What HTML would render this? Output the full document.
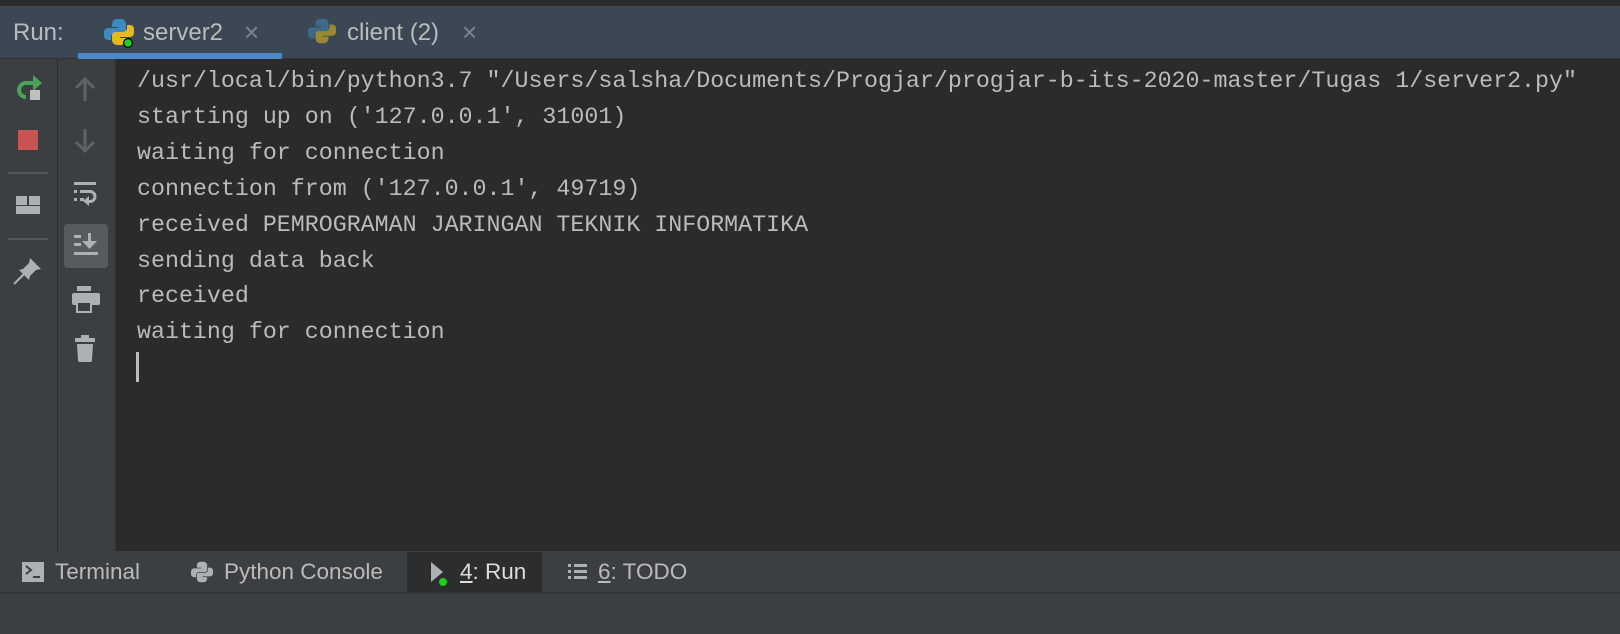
<!DOCTYPE html>
<html><head><style>
body{margin:0;width:1620px;height:634px;background:#2b2b2b;position:relative;overflow:hidden;font-family:"Liberation Sans",sans-serif}
.a{position:absolute}
.mono{font-family:"Liberation Mono",monospace;font-size:23.3px;color:#bbbbbb;white-space:pre}
.tab{font-size:24px;color:#bbbbbb}
.bt{font-size:22.5px;color:#bbbbbb}
</style></head><body>
<div class="a" style="left:0;top:0;width:1620px;height:6px;background:#2b2b2b"></div>
<div class="a" style="left:0;top:6px;width:1620px;height:52px;background:#3c4755"></div>
<div class="a" style="left:0;top:58px;width:1620px;height:1px;background:#323232"></div>
<div class="a tab" style="left:13px;top:19px">Run:</div>
<div class="a" style="left:78px;top:53px;width:204px;height:6px;background:#4a88c7"></div>
<svg class="a" style="left:104px;top:18px" width="30" height="30" viewBox="0 0 30 30">
<path d="M13 1h4a5 5 0 0 1 5 5v6a3 3 0 0 1-3 3h-8a4 4 0 0 0-4 4v3H4a4 4 0 0 1-4-4v-4a4 4 0 0 1 4-4h10V9H8V6a5 5 0 0 1 5-5z" fill="#3d8ac0"/>
<path d="M17 27h-4a5 5 0 0 1-5-5v-5a3 3 0 0 1 3-3h8a4 4 0 0 0 4-4V7h3a4 4 0 0 1 4 4v4a4 4 0 0 1-4 4H16v1h6v2a5 5 0 0 1-5 5z" fill="#e6b81c"/>
<circle cx="24" cy="25" r="5" fill="#000"/><circle cx="24" cy="25" r="3.7" fill="#1fd21f"/></svg>
<div class="a tab" style="left:143px;top:19px">server2</div>
<div class="a" style="left:244px;top:17px;color:#7f8388;font-size:26px">×</div>
<svg class="a" style="left:308px;top:18px" width="28" height="28" viewBox="0 0 30 30">
<path d="M13 1h4a5 5 0 0 1 5 5v6a3 3 0 0 1-3 3h-8a4 4 0 0 0-4 4v3H4a4 4 0 0 1-4-4v-4a4 4 0 0 1 4-4h10V9H8V6a5 5 0 0 1 5-5z" fill="#3e6a8a"/>
<path d="M17 27h-4a5 5 0 0 1-5-5v-5a3 3 0 0 1 3-3h8a4 4 0 0 0 4-4V7h3a4 4 0 0 1 4 4v4a4 4 0 0 1-4 4H16v1h6v2a5 5 0 0 1-5 5z" fill="#9b8834"/></svg>
<div class="a tab" style="left:347px;top:19px">client (2)</div>
<div class="a" style="left:462px;top:17px;color:#7f8388;font-size:26px">×</div>

<div class="a" style="left:0;top:59px;width:57px;height:492px;background:#3c3f41"></div>
<div class="a" style="left:57px;top:59px;width:1px;height:492px;background:#2b2b2b"></div>
<div class="a" style="left:58px;top:59px;width:57px;height:492px;background:#3c3f41"></div>
<div class="a" style="left:115px;top:59px;width:1px;height:492px;background:#323232"></div>
<svg class="a" style="left:14px;top:72px" width="30" height="32" viewBox="0 0 30 32">
<path d="M20 11H12a7 7 0 1 0 0 14" stroke="#4aa357" stroke-width="4" fill="none"/><path d="M19 3l9 8-9 8z" fill="#4aa357"/><rect x="16" y="18" width="10" height="10" fill="#c0c0c0"/></svg>
<div class="a" style="left:18px;top:130px;width:20px;height:20px;background:#c75450"></div>
<div class="a" style="left:8px;top:172px;width:40px;height:2px;background:#555758"></div>
<svg class="a" style="left:15px;top:195px" width="26" height="22"><rect x="1" y="1" width="11" height="9" fill="#aeb1b3"/><rect x="14" y="1" width="11" height="9" fill="#aeb1b3"/><rect x="1" y="11" width="24" height="8" fill="#aeb1b3"/></svg>
<div class="a" style="left:8px;top:238px;width:40px;height:2px;background:#555758"></div>
<svg class="a" style="left:12px;top:255px" width="32" height="32" viewBox="0 0 32 32"><path d="M18 3l11 11-5 1-6 6-1 4-10-10 4-1 6-6z" fill="#aeb1b3"/><path d="M12 19L2 29" stroke="#aeb1b3" stroke-width="2"/></svg>

<svg class="a" style="left:72px;top:75px" width="26" height="90" stroke="#606366" stroke-width="3" fill="none">
<path d="M13 4v22M4 13l9-9 9 9"/><path d="M13 54v22M4 67l9 9 9-9"/></svg>
<svg class="a" style="left:72px;top:180px" width="28" height="30" fill="#aeb1b3"><rect x="2" y="2" width="22" height="3"/><rect x="8" y="10" width="12" height="3"/><rect x="2" y="10" width="3" height="3"/><rect x="2" y="18" width="3" height="3"/><rect x="8" y="18" width="4" height="3"/><path d="M18 11.5a5 5 0 0 1 0 10h-3" stroke="#aeb1b3" stroke-width="3" fill="none"/><path d="M11 21l6-5v10z"/></svg>
<div class="a" style="left:64px;top:224px;width:44px;height:44px;background:#575b5e;border-radius:4px"></div>
<svg class="a" style="left:72px;top:232px" width="30" height="30" fill="#aeb1b3"><rect x="2" y="3" width="7" height="3"/><rect x="2" y="11" width="7" height="3"/><rect x="2" y="20" width="24" height="3"/><rect x="16" y="1" width="3" height="10"/><path d="M10 9h15l-7.5 8z"/></svg>
<svg class="a" style="left:70px;top:285px" width="30" height="28" fill="#aeb1b3"><rect x="7" y="1" width="14" height="5"/><rect x="2" y="8" width="28" height="12" rx="2"/><rect x="7" y="17" width="14" height="10" fill="#3c3f41" stroke="#aeb1b3" stroke-width="2"/></svg>
<svg class="a" style="left:74px;top:335px" width="24" height="28" fill="#aeb1b3"><rect x="1" y="3" width="20" height="4"/><rect x="7" y="0" width="8" height="3"/><path d="M3 9h16l-1 16a2 2 0 0 1-2 2H6a2 2 0 0 1-2-2z"/></svg>

<div class="a mono" style="left:137px;top:64px;line-height:35.9px">/usr/local/bin/python3.7 "/Users/salsha/Documents/Progjar/progjar-b-its-2020-master/Tugas 1/server2.py"
starting up on ('127.0.0.1', 31001)
waiting for connection
connection from ('127.0.0.1', 49719)
received PEMROGRAMAN JARINGAN TEKNIK INFORMATIKA
sending data back
received
waiting for connection</div>
<div class="a" style="left:136px;top:352px;width:3px;height:30px;background:#bbbbbb"></div>

<div class="a" style="left:0;top:551px;width:1620px;height:41px;background:#3c3f41"></div>
<div class="a" style="left:0;top:592px;width:1620px;height:2px;background:#323435"></div>
<div class="a" style="left:0;top:594px;width:1620px;height:40px;background:#3c3f41"></div>
<div class="a" style="left:407px;top:552px;width:135px;height:40px;background:#2b2d2e"></div>
<svg class="a" style="left:22px;top:562px" width="22" height="20"><rect width="22" height="20" fill="#aeb1b3"/><path d="M4 4l5 4-5 4" stroke="#3c3f41" stroke-width="2" fill="none"/><path d="M11 15h7" stroke="#3c3f41" stroke-width="2"/></svg>
<div class="a bt" style="left:55px;top:559px">Terminal</div>
<svg class="a" style="left:191px;top:561px" width="22" height="22" viewBox="0 0 30 30"><path d="M13 1h4a5 5 0 0 1 5 5v6a3 3 0 0 1-3 3h-8a4 4 0 0 0-4 4v3H4a4 4 0 0 1-4-4v-4a4 4 0 0 1 4-4h10V9H8V6a5 5 0 0 1 5-5z" fill="#aeb1b3"/><path d="M17 29h-4a5 5 0 0 1-5-5v-5a3 3 0 0 1 3-3h8a4 4 0 0 0 4-4V9h3a4 4 0 0 1 4 4v4a4 4 0 0 1-4 4H16v1h6v2a5 5 0 0 1-5 5z" fill="#aeb1b3"/></svg>
<div class="a bt" style="left:224px;top:559px">Python Console</div>
<svg class="a" style="left:430px;top:561px" width="18" height="26"><path d="M1 1l12 10-12 10z" fill="#aeb1b3"/><circle cx="13" cy="21" r="4" fill="#18d018"/></svg>
<div class="a bt" style="left:460px;top:559px;color:#dddddd"><u>4</u>: Run</div>
<svg class="a" style="left:568px;top:563px" width="20" height="18" fill="#aeb1b3"><rect x="0" y="1" width="3" height="3"/><rect x="6" y="1" width="13" height="3"/><rect x="0" y="7" width="3" height="3"/><rect x="6" y="7" width="13" height="3"/><rect x="0" y="13" width="3" height="3"/><rect x="6" y="13" width="13" height="3"/></svg>
<div class="a bt" style="left:598px;top:559px"><u>6</u>: TODO</div>
</body></html>
